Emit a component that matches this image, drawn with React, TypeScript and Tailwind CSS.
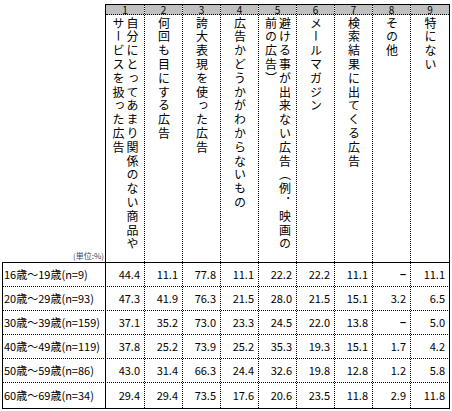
const font = '"Noto Sans CJK JP", "Liberation Sans", sans-serif'

const headers: string[][] = [
  ["自分にとってあまり関係のない商品や", "サービスを扱った広告"],
  ["何回も目にする広告"],
  ["誇大表現を使った広告"],
  ["広告かどうかがわからないもの"],
  ["避ける事が出来ない広告（例．映画の", "前の広告）"],
  ["メールマガジン"],
  ["検索結果に出てくる広告"],
  ["その他"],
  ["特にない"],
]

const rows: { label: string; values: string[] }[] = [
  { label: "16歳～19歳(n=9)", values: ["44.4", "11.1", "77.8", "11.1", "22.2", "22.2", "11.1", "–", "11.1"] },
  { label: "20歳～29歳(n=93)", values: ["47.3", "41.9", "76.3", "21.5", "28.0", "21.5", "15.1", "3.2", "6.5"] },
  { label: "30歳～39歳(n=159)", values: ["37.1", "35.2", "73.0", "23.3", "24.5", "22.0", "13.8", "–", "5.0"] },
  { label: "40歳～49歳(n=119)", values: ["37.8", "25.2", "73.9", "25.2", "35.3", "19.3", "15.1", "1.7", "4.2"] },
  { label: "50歳～59歳(n=86)", values: ["43.0", "31.4", "66.3", "24.4", "32.6", "19.8", "12.8", "1.2", "5.8"] },
  { label: "60歳～69歳(n=34)", values: ["29.4", "29.4", "73.5", "17.6", "20.6", "23.5", "11.8", "2.9", "11.8"] },
]

// column widths include the right border
const colW = ["w-[39px]", "w-[38px]", "w-[38px]", "w-[38px]", "w-[38px]", "w-[38px]", "w-[38px]", "w-[38px]", "w-[39px]"]

export default function App() {
  return (
    <div className="w-[452px] h-[411px] bg-white pl-[2px] pt-[4px] text-black" style={{ fontFamily: font }}>
      {/* header */}
      <div className="flex">
        <div className="w-[103px] flex items-end justify-end pb-[2px] pr-[1px]">
          <span className="text-[8px] leading-[9px] text-[#3a3f66]">(単位:%)</span>
        </div>
        <div className="flex border-l border-t border-black">
          {headers.map((lines, i) => (
            <div
              key={i}
              className={`${colW[i]} flex flex-col ${i === 8 ? "border-r border-solid border-black" : "border-r border-dotted border-black"}`}
            >
              <div className="h-[10px] bg-[#c0c0c0] border-b border-dotted border-black text-[10px] leading-[9px] text-center">
                {i + 1}
              </div>
              <div className="h-[247px] flex justify-center pt-[2px]">
                <div className="[writing-mode:vertical-rl] text-[12px] leading-[14px] tracking-[1.8px]">
                  {lines.map((l, j) => (
                    <span key={j}>
                      {l}
                      {j < lines.length - 1 && <br />}
                    </span>
                  ))}
                </div>
              </div>
            </div>
          ))}
        </div>
      </div>

      {/* body */}
      <div className="w-[448px] border-t border-b border-black">
        {rows.map((r, ri) => (
          <div
            key={ri}
            className={`flex ${ri === 5 ? "h-[25px]" : "h-[24px] border-b border-dotted border-black"}`}
          >
            <div className="w-[104px] border-l border-r border-black flex items-center pl-[1px] text-[11px] whitespace-nowrap">
              {r.label}
            </div>
            {r.values.map((v, ci) => (
              <div
                key={ci}
                className={`${colW[ci]} flex items-center justify-end pr-[4px] text-[11px] ${ci === 8 ? "border-r border-solid border-black" : "border-r border-dotted border-black"}`}
              >
                {v === "–" ? <span className="font-bold" style={{ fontFamily: '"Liberation Sans", sans-serif' }}>{v}</span> : v}
              </div>
            ))}
          </div>
        ))}
      </div>
    </div>
  )
}
